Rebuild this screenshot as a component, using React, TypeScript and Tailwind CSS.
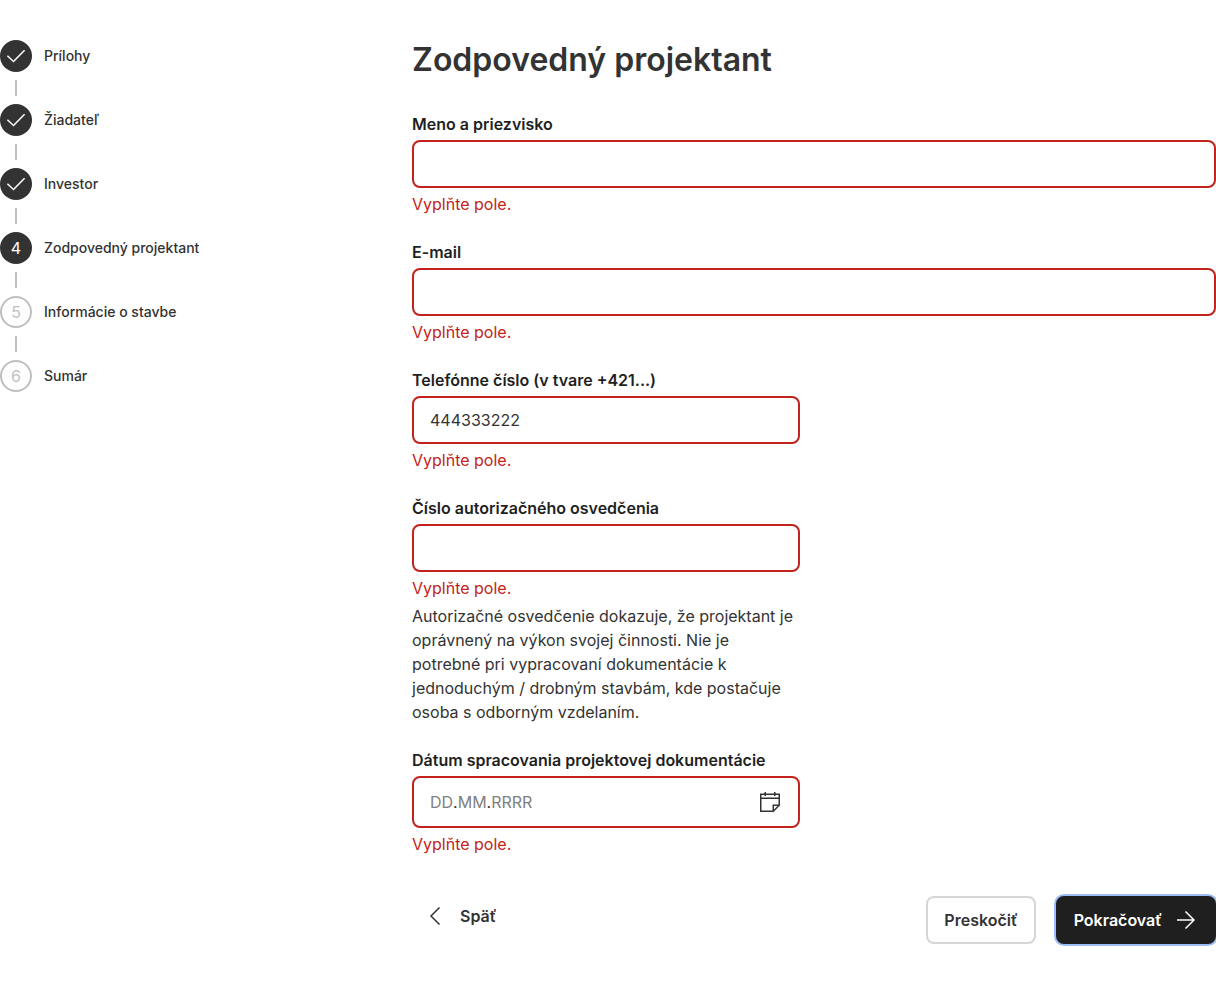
import { useState, type ReactNode } from 'react';

type StepState = 'done' | 'current' | 'upcoming';

const steps: { label: string; state: StepState }[] = [
  { label: 'Prílohy', state: 'done' },
  { label: 'Žiadateľ', state: 'done' },
  { label: 'Investor', state: 'done' },
  { label: 'Zodpovedný projektant', state: 'current' },
  { label: 'Informácie o stavbe', state: 'upcoming' },
  { label: 'Sumár', state: 'upcoming' },
];

function CheckIcon() {
  return (
    <svg viewBox="0 0 24 24" className="size-6" fill="none" stroke="currentColor" strokeWidth="1.5" aria-hidden="true">
      <path d="M3.4 11.8 9.5 17.5 20.6 6.2" />
    </svg>
  );
}

function ChevronLeftIcon() {
  return (
    <svg viewBox="0 0 24 24" className="size-6" fill="none" stroke="currentColor" strokeWidth="1.5" aria-hidden="true">
      <path d="M15.5 3.5 7 12l8.5 8.5" />
    </svg>
  );
}

function ArrowRightIcon() {
  return (
    <svg viewBox="0 0 24 24" className="size-6" fill="none" stroke="currentColor" strokeWidth="1.5" aria-hidden="true">
      <path d="M3 12h17M11.5 3.5 20 12l-8.5 8.5" />
    </svg>
  );
}

function CalendarIcon() {
  return (
    <svg viewBox="0 0 24 24" className="size-6" fill="none" stroke="currentColor" strokeWidth="1.5" aria-hidden="true">
      <path d="M2.75 4.25h18.5v11l-6 6H2.75zM2.75 8.25h18.5M7.25 2v4M16.75 2v4M15.25 21.25v-6h6" />
    </svg>
  );
}

function StepMarker({ state, number }: { state: StepState; number: number }) {
  if (state === 'upcoming') {
    return (
      <span className="flex size-8 shrink-0 items-center justify-center rounded-full border-2 border-[#bfbfbf] text-base font-normal text-[#bfbfbf]">
        {number}
      </span>
    );
  }
  return (
    <span className="flex size-8 shrink-0 items-center justify-center rounded-full bg-[#333] text-base font-normal text-white">
      {state === 'done' ? <CheckIcon /> : number}
    </span>
  );
}

function Stepper() {
  return (
    <ol className="flex w-[332px] shrink-0 flex-col gap-2">
      {steps.map((step, index) => (
        <li key={step.label} className="flex flex-col gap-2" aria-current={step.state === 'current' ? 'step' : undefined}>
          {index > 0 && (
            <span className="flex w-8 justify-center">
              <span className="h-4 w-0.5 bg-[#bfbfbf]" />
            </span>
          )}
          <button type="button" className="flex items-center gap-3 text-left text-sm font-medium">
            <StepMarker state={step.state} number={index + 1} />
            {step.label}
          </button>
        </li>
      ))}
    </ol>
  );
}

function ErrorText({ id }: { id: string }) {
  return (
    <p id={id} className="text-[#c3231a]">
      Vyplňte pole.
    </p>
  );
}

interface FieldProps {
  id: string;
  label: string;
  type?: string;
  initialValue?: string;
  half?: boolean;
  children?: ReactNode;
}

function Field({ id, label, type = 'text', initialValue = '', half = false, children }: FieldProps) {
  const [value, setValue] = useState(initialValue);
  return (
    <div className={half ? 'flex max-w-[388px] flex-col gap-1' : 'flex flex-col gap-1'}>
      <label htmlFor={id} className="font-semibold text-[#1f1f1f]">
        {label}
      </label>
      <input
        id={id}
        type={type}
        value={value}
        onChange={(event) => setValue(event.target.value)}
        aria-invalid="true"
        aria-describedby={`${id}-error`}
        className="h-12 w-full rounded-lg border-2 border-[#c3231a] bg-white px-4 outline-none"
      />
      <ErrorText id={`${id}-error`} />
      {children}
    </div>
  );
}

const segmentClass = 'field-sizing-content bg-transparent outline-none placeholder:text-[#808080]';

function DateField() {
  return (
    <div className="flex max-w-[388px] flex-col gap-1">
      <label htmlFor="date-day" className="font-semibold text-[#1f1f1f]">
        Dátum spracovania projektovej dokumentácie
      </label>
      <div className="flex h-[52px] items-center justify-between rounded-lg border-2 border-[#c3231a] px-4">
        <div className="flex">
          <input
            id="date-day"
            inputMode="numeric"
            maxLength={2}
            placeholder="DD"
            aria-describedby="date-error"
            className={segmentClass}
          />
          <span>.</span>
          <input aria-label="Mesiac" inputMode="numeric" maxLength={2} placeholder="MM" className={segmentClass} />
          <span>.</span>
          <input aria-label="Rok" inputMode="numeric" maxLength={4} placeholder="RRRR" className={segmentClass} />
        </div>
        <button type="button" aria-label="Otvoriť kalendár">
          <CalendarIcon />
        </button>
      </div>
      <ErrorText id="date-error" />
    </div>
  );
}

export default function App() {
  return (
    <div className="flex gap-20 bg-white pt-10 pb-10 font-['Inter',sans-serif] text-base text-[#333]">
      <Stepper />
      <main className="min-w-0 flex-1">
        <h1 className="mb-8 text-[32px] leading-10 font-semibold">Zodpovedný projektant</h1>
        <form className="flex flex-col gap-6" noValidate onSubmit={(event) => event.preventDefault()}>
          <Field id="name" label="Meno a priezvisko" />
          <Field id="email" label="E-mail" type="email" />
          <Field id="phone" label="Telefónne číslo (v tvare +421...)" type="tel" initialValue="444333222" half />
          <Field id="certificate" label="Číslo autorizačného osvedčenia" half>
            <p>
              Autorizačné osvedčenie dokazuje, že projektant je oprávnený na výkon svojej činnosti. Nie je potrebné pri
              vypracovaní dokumentácie k jednoduchým / drobným stavbám, kde postačuje osoba s odborným vzdelaním.
            </p>
          </Field>
          <DateField />
          <div className="mt-4 flex items-start justify-between font-semibold">
            <button type="button" className="flex h-10 items-center gap-3 px-3">
              <ChevronLeftIcon />
              Späť
            </button>
            <div className="flex gap-5">
              <button type="button" className="h-12 rounded-lg border-2 border-[#d6d6d6] px-4">
                Preskočiť
              </button>
              <button
                type="submit"
                className="flex h-12 items-center gap-3 rounded-lg border-2 border-[#1f1f1f] bg-[#1f1f1f] px-4 text-white ring-2 ring-[#9dbcfa]"
              >
                Pokračovať
                <ArrowRightIcon />
              </button>
            </div>
          </div>
        </form>
      </main>
    </div>
  );
}
